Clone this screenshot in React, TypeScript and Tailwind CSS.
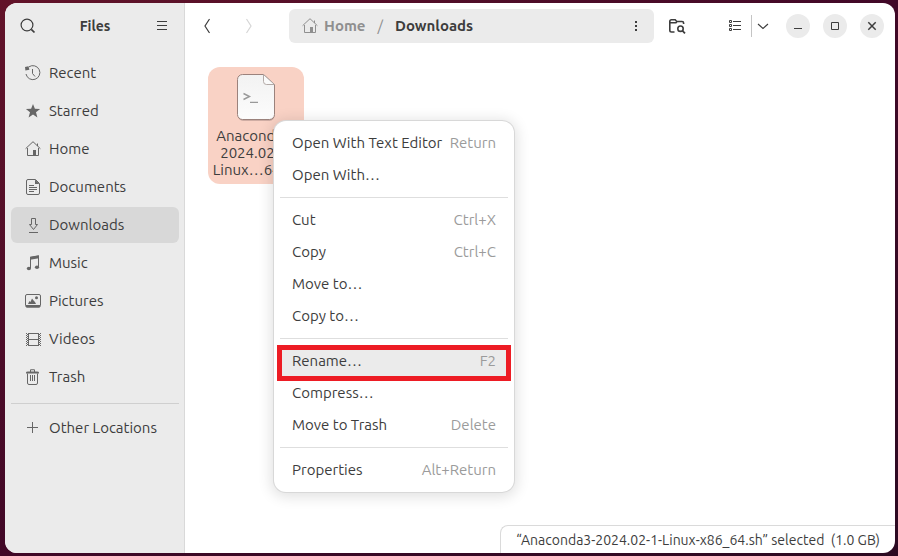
import type { ReactNode } from "react";

type IconProps = { children: ReactNode; className?: string };

function Icon({ children, className = "" }: IconProps) {
  return (
    <svg
      viewBox="0 0 16 16"
      className={`size-4 shrink-0 ${className}`}
      fill="none"
      stroke="currentColor"
      strokeWidth="1"
      aria-hidden="true"
    >
      {children}
    </svg>
  );
}

const HomeIcon = () => (
  <Icon>
    <path d="M.6 7.700 8 .7l7.400 7M2.500 7v7.500h11V7M12.500 5V2.500" />
    <path d="M8 9h3v5.500H8z" fill="currentColor" stroke="none" />
  </Icon>
);

const RecentIcon = () => (
  <Icon>
    <path d="M4 1.800A7 7 0 1 1 1 9" />
    <path d="M0 2l3.500-.8.9 3.600L.4 5.600z" fill="currentColor" stroke="none" />
    <path d="M7.500 4v4.500l2.500 3" />
  </Icon>
);

const StarIcon = () => (
  <Icon>
    <path d="m8 .9 1.900 4.900 5.200.3-4.100 3.200 1.400 5.200L8 11.600l-4.400 2.900L5 9.300.9 6.100l5.200-.3z" fill="currentColor" stroke="none" />
  </Icon>
);

const DocumentsIcon = () => (
  <Icon>
    <path d="M3 .5h7.500l4 4V14a1.500 1.500 0 0 1-1.500 1.500H3A1.500 1.500 0 0 1 1.500 14V2A1.500 1.500 0 0 1 3 .5z" />
    <path d="M10 .5V5h4.500z" fill="currentColor" stroke="none" />
    <path d="M4 6.500h5M4 8.500h8M4 10.500h8M4 12.500h5" />
  </Icon>
);

const DownloadsIcon = () => (
  <Icon>
    <path d="M6.500 1.500h4v6h2l-4 5-4-5h2zM4 15.500h9" />
  </Icon>
);

const MusicIcon = () => (
  <Icon>
    <path d="M5.500 13V2.500L13.500 1v11.500" />
    <path d="M5 1.800 14 .3v3L5 4.800z" fill="currentColor" stroke="none" />
    <ellipse cx="3.900" cy="13.500" rx="2.100" ry="1.800" fill="currentColor" stroke="none" />
    <ellipse cx="12" cy="12.300" rx="2.100" ry="1.800" fill="currentColor" stroke="none" />
  </Icon>
);

const PicturesIcon = () => (
  <Icon>
    <rect x=".5" y="1.500" width="15" height="12.500" rx="1.500" />
    <path d="M1 12h14v1.500q0 1-1 1H2q-1 0-1-1z" fill="currentColor" stroke="none" />
    <path d="m3 11 1.500-3 1 1L7 5.500 9 8l1 1 1 2z" fill="currentColor" stroke="none" />
    <circle cx="11.500" cy="4.700" r="1.500" fill="currentColor" stroke="none" />
  </Icon>
);

const VideosIcon = () => (
  <Icon>
    <path d="M3.500 2v12.500M13.500 2v12.500M3 2.500h11M3 8.500h11M3 14.500h11" />
    <path d="M1.500 2v13M15.500 2v13" strokeDasharray="1 1" />
    <path d="M2.500 2v13M14.500 2v13" strokeDasharray="1 1" strokeDashoffset="1" />
  </Icon>
);

const TrashIcon = () => (
  <Icon>
    <path d="M1 4.500V3.500q0-1 2-1h2V1q0-.8 1-.8h3q1 0 1 .8v1.500h2q2 0 2 1v1z M6 1.200v1.300h3V1.200z" fill="currentColor" fillRule="evenodd" stroke="none" />
    <path d="M2.500 4.500v9.500q0 1.500 1.500 1.500h7q1.500 0 1.500-1.500V4.500M5.500 6v6M7.500 6v6M9.500 6v6" />
  </Icon>
);

const PlusIcon = () => (
  <Icon>
    <path d="M7.500 2v11M2 7.500h11" />
  </Icon>
);

const places = [
  { name: "Recent", icon: <RecentIcon /> },
  { name: "Starred", icon: <StarIcon /> },
  { name: "Home", icon: <HomeIcon /> },
  { name: "Documents", icon: <DocumentsIcon /> },
  { name: "Downloads", icon: <DownloadsIcon />, active: true },
  { name: "Music", icon: <MusicIcon /> },
  { name: "Pictures", icon: <PicturesIcon /> },
  { name: "Videos", icon: <VideosIcon /> },
  { name: "Trash", icon: <TrashIcon /> },
];

function PlaceRow({ name, icon, active }: { name: string; icon: ReactNode; active?: boolean }) {
  return (
    <button
      type="button"
      aria-current={active ? "page" : undefined}
      className={`flex h-9 w-full shrink-0 items-center gap-2 rounded-md px-3.5 text-left ${active ? "bg-[#d8d8d8]" : ""}`}
    >
      <span className="text-[#666666]">{icon}</span>
      {name}
    </button>
  );
}

function Sidebar() {
  return (
    <aside className="flex w-45 shrink-0 flex-col border-r border-[#d9d9d9] bg-[#ebebeb] pr-[5px] pl-1.5">
      <header className="flex h-[46px] shrink-0 items-center justify-between">
        <button type="button" aria-label="Search" className="flex size-[34px] items-center justify-center">
          <Icon>
            <circle cx="7" cy="7" r="5.900" strokeWidth="1.200" />
            <path d="m11.300 11.300 3.200 3.200" strokeWidth="1.700" />
          </Icon>
        </button>
        <h1 className="text-sm font-bold">Files</h1>
        <button type="button" aria-label="Main menu" className="flex size-[34px] items-center justify-center">
          <Icon>
            <path d="M3 3.500h10M3 7.500h10M3 11.500h10" />
          </Icon>
        </button>
      </header>
      <nav aria-label="Places" className="flex flex-col gap-0.5 pt-1.5">
        {places.map((place) => (
          <PlaceRow key={place.name} {...place} />
        ))}
      </nav>
      <hr className="mt-2 mb-1.5 border-[#cfcfcf]" />
      <PlaceRow name="Other Locations" icon={<PlusIcon />} />
    </aside>
  );
}

function WindowButton({ label, children }: { label: string; children: ReactNode }) {
  return (
    <button type="button" aria-label={label} className="flex size-6 items-center justify-center rounded-full bg-[#ebebeb]">
      <Icon>{children}</Icon>
    </button>
  );
}

function HeaderBar() {
  return (
    <header className="flex h-[46px] shrink-0 items-center pr-[11px] pl-[5px]">
      <div className="mr-[23px] flex gap-2">
        <button type="button" aria-label="Back" className="flex size-[34px] items-center justify-center">
          <Icon>
            <path d="M10.500 1 6 8l4.500 7" strokeWidth="1.200" />
          </Icon>
        </button>
        <button type="button" aria-label="Forward" disabled className="flex size-[34px] items-center justify-center text-[#d6d6d6]">
          <Icon>
            <path d="M5.500 1 10 8l-4.500 7" strokeWidth="1.200" />
          </Icon>
        </button>
      </div>
      <nav aria-label="Path" className="flex h-[34px] flex-1 items-center rounded-md bg-[#ebebeb] pr-px pl-[13px] font-bold">
        <button type="button" className="flex items-center gap-1.5 text-[#8f8f8f]">
          <HomeIcon />
          Home
        </button>
        <span className="mx-3 font-normal text-[#8f8f8f]">/</span>
        <button type="button">Downloads</button>
        <button type="button" aria-label="Folder menu" className="ml-auto flex size-[34px] items-center justify-center">
          <Icon>
            <path d="M7 3h2v2H7zM7 7h2v2H7zM7 11h2v2H7z" fill="currentColor" stroke="none" />
          </Icon>
        </button>
      </nav>
      <button type="button" aria-label="Search this folder" className="mr-6 ml-1.5 flex size-[34px] items-center justify-center">
        <Icon className="overflow-visible">
          <path d="M5.500 14H2.500Q.8 14 .8 12.300V3.500Q.8 1.800 2.500 1.800h3.700l1.500 1.700h5.300q1.600 0 1.600 1.600V6M1 4.700h6l1-1.200" strokeWidth="1.600" />
          <circle cx="11.500" cy="10.700" r="2.700" strokeWidth="1.600" />
          <path d="m13.300 12.700 2.700 2.600" strokeWidth="1.800" />
        </Icon>
      </button>
      <div className="mr-[11px] flex items-center">
        <button type="button" aria-label="List view" className="flex h-[34px] w-[33px] items-center justify-center">
          <Icon>
            <path d="M2.500 2.500h2v2h-2zM2.500 6.500h2v2h-2zM2.500 10.500h2v2h-2zM6 3.500h8M6 7.500h8M6 11.500h8" />
          </Icon>
        </button>
        <span className="h-[22px] w-px bg-[#c4c4c4]" />
        <button type="button" aria-label="View options" className="flex h-[34px] w-[22px] items-center justify-center">
          <Icon>
            <path d="m3 6 5 4.500L13 6" strokeWidth="1.100" />
          </Icon>
        </button>
        <span className="w-px" />
      </div>
      <div className="flex gap-[13px]">
        <WindowButton label="Minimize">
          <path d="M4 10.500h8" />
        </WindowButton>
        <WindowButton label="Maximize">
          <path d="M4.500 4.500h7v7h-7z" />
        </WindowButton>
        <WindowButton label="Close">
          <path d="m4.300 4.300 7.400 7.400m0-7.400-7.400 7.400" strokeWidth="1.500" />
        </WindowButton>
      </div>
    </header>
  );
}

function ScriptFile() {
  return (
    <button type="button" className="flex w-24 flex-col items-center rounded-xl bg-[#f9d2c5] pt-1.5 pb-1.5 text-center">
      <svg viewBox="0 0 40 50" className="mb-1 h-[50px] w-10" aria-hidden="true">
        <defs>
          <linearGradient id="paper" x1="0" y1="0" x2="0" y2="1">
            <stop offset="0" stopColor="#f2f2f2" />
            <stop offset="1" stopColor="#fcfcfc" />
          </linearGradient>
        </defs>
        <path d="M6 2h22l10.500 10v31a5 5 0 0 1-5 5H7a5 5 0 0 1-5-5V7a5 5 0 0 1 4-5z" fill="#b3948d" opacity=".6" />
        <path d="M6.500 1.500h21l11 10v30a5 5 0 0 1-5 5h-27a5 5 0 0 1-5-5v-35a5 5 0 0 1 5-5z" fill="url(#paper)" stroke="#9b827c" />
        <path d="M27.500 1.500v7a3 3 0 0 0 3 3h8z" fill="#fafafa" stroke="#aaa09d" strokeWidth=".9" />
        <path d="m7.500 20.500 6 3-6 3" fill="none" stroke="#999999" strokeWidth="1.400" />
        <path d="M14 29.300h8" stroke="#999999" strokeWidth="1.200" />
      </svg>
      <span className="leading-[17px]">
        Anaconda3-
        <br />
        2024.02-1-
        <br />
        Linux…64.sh
      </span>
    </button>
  );
}

type Entry = { label: string; keys?: string; active?: boolean };

const menuGroups: Entry[][] = [
  [{ label: "Open With Text Editor", keys: "Return" }, { label: "Open With…" }],
  [
    { label: "Cut", keys: "Ctrl+X" },
    { label: "Copy", keys: "Ctrl+C" },
    { label: "Move to…" },
    { label: "Copy to…" },
  ],
  [
    { label: "Rename…", keys: "F2", active: true },
    { label: "Compress…" },
    { label: "Move to Trash", keys: "Delete" },
  ],
  [{ label: "Properties", keys: "Alt+Return" }],
];

function ContextMenu() {
  return (
    <div
      role="menu"
      className="absolute top-[72px] left-[89px] w-60 rounded-xl bg-white px-1.5 shadow-[0_0_0_1px_#d8d8d8,0_2px_14px_3px_rgba(0,0,0,0.12)]"
    >
      {menuGroups.map((group, index) => (
        <div key={group[0].label} className={`py-1.5 ${index > 0 ? "border-t border-[#dedede]" : ""}`}>
          {group.map(({ label, keys, active }) => (
            <button
              key={label}
              type="button"
              role="menuitem"
              className={`relative flex h-8 w-full items-center justify-between px-3 whitespace-nowrap ${active ? "bg-[#ebebeb]" : ""}`}
            >
              <span>{label}</span>
              {keys && <span className="text-[#9b9b9b]">{keys}</span>}
              {active && <span className="absolute -inset-x-[3px] top-0 -bottom-1 z-10 border-5 border-[#ed1c24]" />}
            </button>
          ))}
        </div>
      ))}
    </div>
  );
}

export default function App() {
  return (
    <div className="flex h-screen bg-linear-to-br from-[#621329] via-[#410827] to-[#2c0a22] pt-[3px] pr-[3px] pb-[3px] pl-[5px] font-['Ubuntu','Noto_Sans',sans-serif] text-[15px] text-[#3d3d3d]">
      <div className="flex min-w-0 flex-1 overflow-hidden rounded-xl bg-white">
        <Sidebar />
        <main className="flex min-w-0 flex-1 flex-col">
          <HeaderBar />
          <section aria-label="Downloads" className="relative flex flex-1 flex-col justify-between">
            <div className="px-[23px] pt-[18px]">
              <ScriptFile />
            </div>
            <ContextMenu />
            <footer className="flex h-7 items-center self-end rounded-tl-lg border-t border-l border-[#dadada] px-[15px] pt-px text-sm whitespace-pre">
              “Anaconda3-2024.02-1-Linux-x86_64.sh” selected  (1.0 GB)
            </footer>
          </section>
        </main>
      </div>
    </div>
  );
}
